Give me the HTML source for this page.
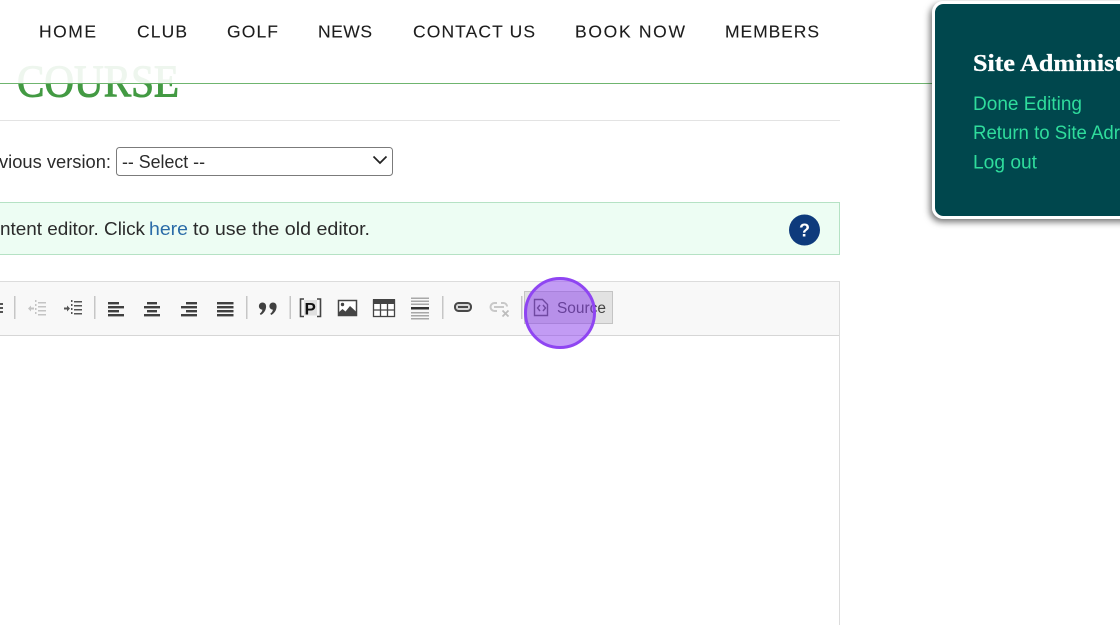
<!DOCTYPE html>
<html><head><meta charset="utf-8"><title>Editor</title>
<style>
html,body{margin:0;padding:0;width:1120px;height:625px;overflow:hidden;background:#fff}
svg{display:block;position:absolute;left:0;top:0}
.s{font-family:"Liberation Sans",sans-serif}
</style></head>
<body>
<svg width="1120" height="625" viewBox="0 0 1120 625" xmlns="http://www.w3.org/2000/svg">
<defs><filter id="sh" x="-20%" y="-20%" width="140%" height="140%"><feDropShadow dx="-2" dy="3" stdDeviation="3.500" flood-color="#000" flood-opacity=".55"/></filter></defs>
<rect width="1120" height="625" fill="#fff"/>
<!-- heading -->
<text x="17" y="96.500" font-family="'Liberation Serif',serif" font-size="46" fill="#439a43" stroke="#439a43" stroke-width="1.100" textLength="162" lengthAdjust="spacingAndGlyphs">COURSE</text>
<!-- header overlay -->
<rect x="0" y="0" width="932" height="83" fill="#fff" fill-opacity=".91"/>
<rect x="0" y="83" width="932" height="1" fill="#6fb56f"/>
<g class="s" font-size="17.500" fill="#1c1c1c" stroke="#1c1c1c" stroke-width=".1">
<text x="39" y="37.500" textLength="57" lengthAdjust="spacing">HOME</text>
<text x="137" y="37.500" textLength="50" lengthAdjust="spacing">CLUB</text>
<text x="227" y="37.500" textLength="51" lengthAdjust="spacing">GOLF</text>
<text x="318" y="37.500" textLength="54" lengthAdjust="spacing">NEWS</text>
<text x="413" y="37.500" textLength="122" lengthAdjust="spacing">CONTACT US</text>
<text x="575" y="37.500" textLength="110" lengthAdjust="spacing">BOOK NOW</text>
<text x="725" y="37.500" textLength="94" lengthAdjust="spacing">MEMBERS</text>
</g>
<rect x="0" y="120" width="840" height="1" fill="#e3e3e3"/>
<!-- version -->
<rect x="116.500" y="147.500" width="276" height="28" rx="3" fill="#fff" stroke="#7b7b7b"/>
<g class="s" font-size="18.500" fill="#2b2b2b">
<text x="-1" y="168" textLength="112" lengthAdjust="spacingAndGlyphs">vious version:</text>
<text x="122" y="168" textLength="83" lengthAdjust="spacingAndGlyphs">-- Select --</text>
</g>
<path d="M373.500 156.500l6.500 6.500 6.500-6.500" fill="none" stroke="#222" stroke-width="1.700"/>
<!-- banner -->
<rect x="-2" y="202.500" width="841.500" height="52" fill="#edfdf3" stroke="#b5e2c4"/>
<g class="s" font-size="18.500" fill="#2b2b2b">
<text x="0" y="235" textLength="145" lengthAdjust="spacingAndGlyphs">ntent editor. Click</text>
<text x="149" y="235" fill="#2b6ca8" textLength="39" lengthAdjust="spacingAndGlyphs">here</text>
<text x="193" y="235" textLength="177" lengthAdjust="spacingAndGlyphs">to use the old editor.</text>
</g>
<circle cx="804.500" cy="230" r="15.500" fill="#0e3a7c"/>
<text class="s" x="804.500" y="236.500" font-size="18" font-weight="700" fill="#fff" text-anchor="middle">?</text>
<!-- editor -->
<rect x="-2" y="281.500" width="841.500" height="360" fill="#fff" stroke="#dcdcdc"/>
<rect x="-1" y="282" width="840" height="53" fill="#f8f8f8"/>
<rect x="-1" y="335" width="840" height="1" fill="#d6d6d6"/>
<!-- separators -->
<g fill="#c6c6c6">
<rect x="14" y="296" width="1.500" height="23"/><rect x="94" y="296" width="1.500" height="23"/>
<rect x="246" y="296" width="1.500" height="23"/><rect x="289.500" y="296" width="1.500" height="23"/>
<rect x="442" y="296" width="1.500" height="23"/><rect x="521" y="296" width="1.500" height="23"/>
</g>
<!-- list fragment -->
<g fill="#555"><rect x="-1" y="303" width="4" height="2"/><rect x="-1" y="307" width="4" height="2"/><rect x="-1" y="311" width="4" height="2"/></g>
<!-- outdent (disabled) -->
<g fill="#c4c4c4"><rect x="35" y="300" width="1.500" height="2"/><rect x="35" y="304" width="1.500" height="2"/><rect x="35" y="308" width="1.500" height="2"/><rect x="35" y="312" width="1.500" height="2"/>
<rect x="38" y="302" width="8" height="1.500"/><rect x="38" y="306" width="8" height="1.500"/><rect x="38" y="310" width="8" height="1.500"/><rect x="38" y="314" width="8" height="1.500"/>
<path d="M28 308.500l3-3v2h3v2h-3v2z"/></g>
<!-- indent -->
<g fill="#555"><rect x="71" y="300" width="1.500" height="2"/><rect x="71" y="304" width="1.500" height="2"/><rect x="71" y="308" width="1.500" height="2"/><rect x="71" y="312" width="1.500" height="2"/>
<rect x="74" y="301" width="8" height="1.500"/><rect x="74" y="305" width="8" height="1.500"/><rect x="74" y="309" width="8" height="1.500"/><rect x="74" y="313" width="8" height="1.500"/>
<path d="M70 308.500l-3-3v2h-3v2h3v2z"/></g>
<!-- align -->
<g fill="#404040">
<rect x="108" y="302" width="11" height="2.400"/><rect x="108" y="306" width="16" height="2.400"/><rect x="108" y="310" width="11" height="2.400"/><rect x="108" y="314" width="16" height="2.400"/>
<rect x="147" y="302" width="10" height="2.400"/><rect x="144" y="306" width="16" height="2.400"/><rect x="147" y="310" width="10" height="2.400"/><rect x="144" y="314" width="16" height="2.400"/>
<rect x="186" y="302" width="11" height="2.400"/><rect x="181" y="306" width="16" height="2.400"/><rect x="186" y="310" width="11" height="2.400"/><rect x="181" y="314" width="16" height="2.400"/>
<rect x="217" y="302" width="16.500" height="2.400"/><rect x="217" y="306" width="16.500" height="2.400"/><rect x="217" y="310" width="16.500" height="2.400"/><rect x="217" y="314" width="16.500" height="2.400"/>
</g>
<!-- blockquote -->
<g fill="#404040">
<path d="M262.500 302.500a3.600 3.600 0 0 1 3.600 3.600c0 4.400-2.500 7.300-5.400 8.900l-.9-1.400c1.400-1.100 2.400-2.200 2.600-3.900a3.600 3.600 0 0 1 .1-7.200z"/>
<path d="M273 302.500a3.600 3.600 0 0 1 3.600 3.600c0 4.400-2.500 7.300-5.400 8.900l-.9-1.400c1.400-1.100 2.400-2.200 2.600-3.900a3.600 3.600 0 0 1 .1-7.200z"/>
</g>
<!-- [P] -->
<rect x="304" y="300" width="13" height="15.500" fill="#e0e0e0"/>
<path d="M304 299h-3.500v17.500h3.500M317 299h3.500v17.500H317" fill="none" stroke="#444" stroke-width="1.600"/>
<text class="s" x="304.500" y="314.500" font-size="17" font-weight="700" fill="#111">P</text>
<!-- image -->
<rect x="338.500" y="300.500" width="18" height="15" fill="#fff" stroke="#444" stroke-width="1.500"/>
<circle cx="342.500" cy="304.500" r="1.700" fill="#444"/>
<path d="M338.500 315.500v-3l4-3.500 3 2.500 4.500-5.500 6.500 6v3.500z" fill="#444"/>
<!-- table -->
<rect x="373.500" y="300" width="21" height="16.500" fill="#fff" stroke="#444" stroke-width="1.300"/>
<rect x="373" y="299" width="22" height="5" fill="#444"/>
<path d="M380.500 304v12M387.500 304v12M373.500 310h21" stroke="#444" stroke-width="1.300" fill="none"/>
<!-- hr -->
<g fill="#a8a8a8"><rect x="411" y="297.500" width="18" height="1.500"/><rect x="411" y="300.500" width="18" height="1.500"/><rect x="411" y="303.500" width="18" height="1.500"/>
<rect x="411" y="312" width="18" height="1.500"/><rect x="411" y="315" width="18" height="1.500"/><rect x="411" y="318" width="18" height="1.500"/></g>
<rect x="411" y="307" width="18" height="2.500" fill="#333"/>
<!-- link -->
<rect x="455" y="303" width="16" height="8" rx="3.500" fill="#d8d8d8" stroke="#484848" stroke-width="2"/>
<rect x="458" y="306" width="10" height="2" fill="#484848"/>
<!-- unlink -->
<path d="M497 303h-2.500a3.500 3.500 0 0 0 0 8H497M501 303h2.500a3.500 3.500 0 0 1 3.500 3.500" fill="none" stroke="#c8c8c8" stroke-width="2"/>
<rect x="494" y="306" width="10" height="2" fill="#c8c8c8"/>
<path d="M502.500 310.500l6 6M508.500 310.500l-6 6" fill="none" stroke="#bdbdbd" stroke-width="1.800"/>
<!-- source -->
<rect x="524.500" y="291.500" width="88" height="32" fill="#e2e2e2" stroke="#c4c4c4"/>
<path d="M534.500 299.500h8l5 5v11h-13z" fill="none" stroke="#555" stroke-width="1.400"/>
<path d="M540 305l-2.500 3 2.500 3M543 305l2.500 3-2.500 3" fill="none" stroke="#555" stroke-width="1.400"/>
<text class="s" x="557" y="313" font-size="15.500" fill="#444" textLength="49" lengthAdjust="spacingAndGlyphs">Source</text>
<!-- highlight circle -->
<circle cx="560" cy="313" r="34.500" fill="#8b3df0" fill-opacity=".5" stroke="#8f45f2" stroke-width="3"/>
<!-- admin panel -->
<rect x="933.500" y="2.500" width="220" height="215" rx="10" fill="#03474e" stroke="#fff" stroke-width="3" filter="url(#sh)"/>
<text x="973" y="71" font-family="'Liberation Serif',serif" font-size="24" font-weight="700" fill="#fff" stroke="#fff" stroke-width=".3" textLength="150" lengthAdjust="spacingAndGlyphs">Site Administ</text>
<g class="s" font-size="19.500" fill="#2fdc9c">
<text x="973" y="110" textLength="109" lengthAdjust="spacingAndGlyphs">Done Editing</text>
<text x="973" y="139" textLength="147" lengthAdjust="spacingAndGlyphs">Return to Site Adr</text>
<text x="973" y="168.500" textLength="64" lengthAdjust="spacingAndGlyphs">Log out</text>
</g>
</svg>
</body></html>
